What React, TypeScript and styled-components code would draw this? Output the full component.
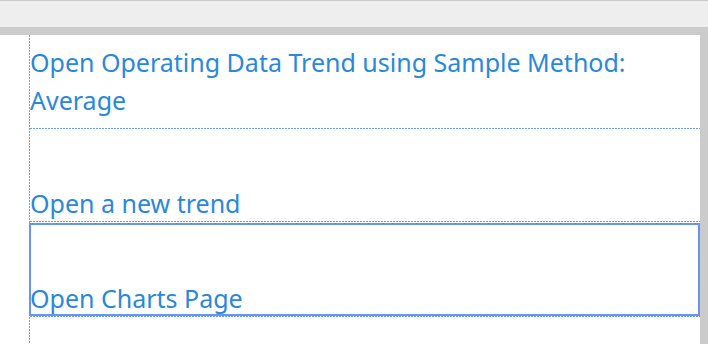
import { FC } from "react";
import styled, { createGlobalStyle } from "styled-components";

const GlobalStyle = createGlobalStyle`
    html, body {
        margin: 0;
        padding: 0;
        background: #ffffff;
    }
    #root {
        height: 344px;
    }
`

const dots = "#6a9cf2"

const Page = styled.div`
    display: flex;
    flex-direction: column;
    width: 708px;
    height: 344px;
    overflow: hidden;
    font-family: "Noto Sans", "Open Sans", sans-serif;
`

const TopBar = styled.div`
    height: 26px;
    flex: none;
    background: #eeeeee;
    border-top: 1px solid #c9c9c9;
`

const Body = styled.div`
    flex: 1;
    display: flex;
    background: #f0f0f0;
`

const Frame = styled.div`
    flex: 1;
    display: flex;
    background: #cbcbcb;
    padding: 8px 8px 0 0;
`

const Panel = styled.div`
    flex: 1;
    background: #ffffff;
    padding-left: 29px;
    display: flex;
`

const Menu = styled.ul`
    flex: 1;
    margin: 0;
    padding: 0 0 0 1px;
    list-style: none;
    background-image: linear-gradient(to bottom, ${dots} 2px, transparent 2px);
    background-size: 1px 3px;
    background-repeat: repeat-y;
    background-position: left top;
`

const Item = styled.li<{ $top?: boolean; $focused?: boolean; $h: number }>`
    position: relative;
    height: ${p => p.$h}px;
    box-sizing: border-box;
    display: flex;
    flex-direction: column;
    justify-content: ${p => (p.$top ? "flex-start" : "flex-end")};
    padding: ${p => (p.$top ? "8px 0 0" : "0 0 1px")};
    background-image: linear-gradient(to right, ${dots} 2px, transparent 2px);
    background-size: 3px 1px;
    background-repeat: repeat-x;
    background-position: left bottom;
    color: #2a88d9;
    font-size: 25px;
    line-height: ${p => (p.$top ? 38 : 36)}px;
    cursor: pointer;

    &::after {
        content: "";
        display: ${p => (p.$focused ? "block" : "none")};
        position: absolute;
        top: 1px;
        bottom: 1px;
        left: -1px;
        right: 0;
        border: 2px solid #6896ee;
        pointer-events: none;
    }
`

const App: FC = () => {
    return (
        <>
            <GlobalStyle />
            <Page>
                <TopBar />
                <Body>
                    <Frame>
                        <Panel>
                            <Menu>
                                <Item $top $h={94}>Open Operating Data Trend using Sample Method: Average</Item>
                                <Item $h={93}>Open a new trend</Item>
                                <Item $h={95} $focused>Open Charts Page</Item>
                            </Menu>
                        </Panel>
                    </Frame>
                </Body>
            </Page>
        </>
    );
}

export default App;
